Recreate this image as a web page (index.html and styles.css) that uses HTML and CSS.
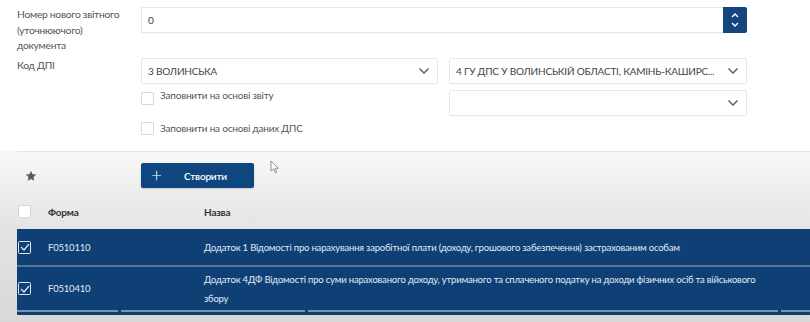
FILE: index.html
```html
<!DOCTYPE html>
<html lang="uk">
<head>
<meta charset="utf-8">
<link rel="stylesheet" href="styles.css">
</head>
<body>
<div class="page">
  <section class="form">
    <div class="form-row first">
      <div class="label">Номер нового звітного (уточнюючого) документа</div>
      <div class="number-field">
        <div class="input">0</div>
        <div class="spin">
          <svg width="10" height="20" viewBox="0 0 10 20"><path d="M2 7 L5 4 L8 7" fill="none" stroke="#fff" stroke-width="1.4"/><path d="M2 13 L5 16 L8 13" fill="none" stroke="#fff" stroke-width="1.4"/></svg>
        </div>
      </div>
    </div>
    <div class="form-row second">
      <div class="label">Код ДПІ</div>
      <div class="dpi-grid">
        <div class="col">
          <div class="select"><span class="val">3 ВОЛИНСЬКА</span><svg class="chev" width="12" height="8" viewBox="0 0 12 8"><path d="M1.5 1.5 L6 6 L10.5 1.5" fill="none" stroke="#555" stroke-width="1.3"/></svg></div>
          <label class="check c1"><span class="box"></span><span>Заповнити на основі звіту</span></label>
          <label class="check c2"><span class="box"></span><span>Заповнити на основі даних ДПС</span></label>
        </div>
        <div class="col">
          <div class="select"><span class="val">4 ГУ ДПС У ВОЛИНСЬКІЙ ОБЛАСТІ, КАМІНЬ-КАШИРС...</span><svg class="chev" width="12" height="8" viewBox="0 0 12 8"><path d="M1.5 1.5 L6 6 L10.5 1.5" fill="none" stroke="#555" stroke-width="1.3"/></svg></div>
          <div class="select empty"><span class="val"></span><svg class="chev" width="12" height="8" viewBox="0 0 12 8"><path d="M1.5 1.5 L6 6 L10.5 1.5" fill="none" stroke="#555" stroke-width="1.3"/></svg></div>
        </div>
      </div>
    </div>
  </section>
  <section class="lower">
    <div class="toolbar">
      <div class="star">
        <svg width="12" height="12" viewBox="0 0 24 24"><path d="M12 1.5 L15.1 8.3 L22.5 9.1 L17 14.1 L18.5 21.5 L12 17.8 L5.5 21.5 L7 14.1 L1.5 9.1 L8.9 8.3 Z" fill="#5a5a5a"/></svg>
      </div>
      <button class="btn-create"><span class="plus">+</span><span>Створити</span></button>
    </div>
    <div class="table">
      <div class="thead">
        <div class="c-check"><span class="box"></span></div>
        <div class="c-form">Форма</div>
        <div class="c-name">Назва</div>
      </div>
      <div class="trow">
        <div class="c-check"><span class="box checked"><svg width="10" height="8" viewBox="0 0 10 8"><path d="M1 4 L4 7 L9 1" fill="none" stroke="#dfe7f0" stroke-width="1.2"/></svg></span></div>
        <div class="c-form">F0510110</div>
        <div class="c-name">Додаток 1 Відомості про нарахування заробітної плати (доходу, грошового забезпечення) застрахованим особам</div>
      </div>
      <div class="trow tall">
        <div class="c-check"><span class="box checked"><svg width="10" height="8" viewBox="0 0 10 8"><path d="M1 4 L4 7 L9 1" fill="none" stroke="#dfe7f0" stroke-width="1.2"/></svg></span></div>
        <div class="c-form">F0510410</div>
        <div class="c-name">Додаток 4ДФ Відомості про суми нарахованого доходу, утриманого та сплаченого податку на доходи фізичних осіб та військового збору</div>
      </div>
      <div class="tfoot">
        <span class="seg s1"></span><span class="seg s2"></span><span class="seg s3"></span><span class="seg s4"></span>
      </div>
    </div>
  </section>
  <svg class="cursor" width="10" height="14" viewBox="0 0 10 14"><path d="M1 1 L1 11 L3.5 8.8 L5.3 12.8 L6.8 12.1 L5 8.3 L8.3 8.3 Z" fill="#fff" stroke="#777" stroke-width="0.8"/></svg>
</div>
</body>
</html>
```
FILE: styles.css
```css
html, body {
  margin: 0;
  padding: 0;
}
body {
  width: 810px;
  height: 322px;
  overflow: hidden;
  font-family: Lato, "Open Sans", "Liberation Sans", sans-serif;
  font-size: 10px;
  letter-spacing: -0.1px;
  color: #4a4a4a;
  background: #fff;
}
.page {
  position: relative;
  width: 810px;
  height: 322px;
  overflow: hidden;
}
.form {
  padding: 7px 63px 0 17px;
  height: 144px;
  box-sizing: border-box;
}
.form-row {
  display: grid;
  grid-template-columns: 124px 1fr;
}
.form-row.second {
  margin-top: 4px;
}
.label {
  line-height: 15.5px;
  color: #555;
  width: 112px;
  font-size: 10.3px;
  letter-spacing: -0.3px;
}
.number-field {
  display: flex;
  height: 26px;
}
.input {
  flex: 1;
  border: 1px solid #e6e6e6;
  border-right: none;
  border-radius: 2px 0 0 2px;
  padding-left: 6px;
  line-height: 24px;
  color: #444;
  box-shadow: 0 1px 1px rgba(0,0,0,0.03);
}
.spin {
  width: 24px;
  background: #13457e;
  border-radius: 0 2px 2px 0;
  display: flex;
  align-items: center;
  justify-content: center;
}
.dpi-grid {
  display: grid;
  grid-template-columns: 297px 298px;
  column-gap: 11px;
}
.col {
  display: flex;
  flex-direction: column;
}
.select {
  height: 26px;
  box-sizing: border-box;
  border: 1px solid #e8e8e8;
  border-radius: 2px;
  display: flex;
  align-items: center;
  justify-content: space-between;
  padding: 0 7px 0 6px;
  color: #444;
  box-shadow: 0 1px 1px rgba(0,0,0,0.03);
}
.select .val {
  white-space: nowrap;
  overflow: hidden;
  letter-spacing: -0.2px;
}
.select + .select {
  margin-top: 6px;
}
.check {
  display: flex;
  align-items: flex-start;
  gap: 6px;
  color: #555;
  line-height: 12px;
  letter-spacing: -0.2px;
}
.check.c1 { margin-top: 8px; }
.check.c2 { margin-top: 17px; }
.check.c1 span:last-child { margin-top: -3px; }
.box {
  display: inline-block;
  width: 11px;
  height: 11px;
  border: 1px solid #d9d9d9;
  border-radius: 1px;
  background: #fff;
  flex: none;
}
.lower {
  margin-top: 7px;
  height: 171px;
  background: linear-gradient(#f8f8f8 0px, #f3f3f3 20px, #e3e3e3 80px, #d8d8d8 171px);
  border-top: 1px solid #e4e4e4;
  margin-left: 17px;
  position: relative;
}
.lower::before {
  content: "";
  position: absolute;
  left: -17px;
  top: -1px;
  width: 17px;
  height: 172px;
  background: linear-gradient(#f8f8f8 0px, #f3f3f3 20px, #e3e3e3 80px, #d8d8d8 171px);
}
.toolbar {
  display: flex;
  align-items: center;
  height: 25px;
  padding-top: 11px;
}
.star {
  width: 124px;
  box-sizing: border-box;
  padding-left: 8px;
  display: flex;
  align-items: center;
}
.btn-create {
  width: 113px;
  height: 25px;
  background: #10467f;
  border: none;
  border-radius: 2px;
  color: #fff;
  font-family: inherit;
  font-size: 10px;
  font-weight: 600;
  letter-spacing: -0.2px;
  display: flex;
  align-items: center;
  padding: 0 0 0 10px;
  box-shadow: 0 1px 2px rgba(0,0,0,0.15);
}
.plus {
  font-size: 19px;
  font-weight: 300;
  width: 33px;
  text-align: left;
  line-height: 20px;
  margin-top: -2px;
}
.table {
  margin-left: -9px;
  margin-top: 6px;
}
.thead, .trow {
  display: grid;
  grid-template-columns: 40px 156px 1fr;
  align-items: center;
}
.thead {
  height: 35px;
  color: #333;
}
.thead .c-name, .thead .c-form {
  font-weight: 700;
  letter-spacing: -0.2px;
}
.c-check {
  padding-left: 10px;
  display: flex;
}
.thead .c-check .box {
  border-color: #d5d5d5;
}
.trow {
  background: #0e4076;
  color: #e3eaf2;
  height: 36px;
  border-bottom: 2px solid #5d7590;
  font-size: 9.5px;
  letter-spacing: -0.2px;
}
.trow.tall {
  height: 43px;
  border-bottom: none;
}
.trow .c-name {
  width: 562px;
  line-height: 19px;
}
.box.checked {
  background: transparent;
  border: 1.3px solid #dfe7f0;
  width: 11px;
  height: 11px;
  display: flex;
  align-items: center;
  justify-content: center;
  border-radius: 1.5px;
}
.tfoot {
  background: #0e4076;
  height: 5px;
  display: flex;
  gap: 3px;
}
.seg {
  height: 2px;
  background: #7d93ad;
}
.s1 { width: 110px; }
.s2 { width: 184px; }
.s3 { width: 470px; }
.s4 { flex: 1; }
.cursor {
  position: absolute;
  left: 270px;
  top: 160px;
}
```
